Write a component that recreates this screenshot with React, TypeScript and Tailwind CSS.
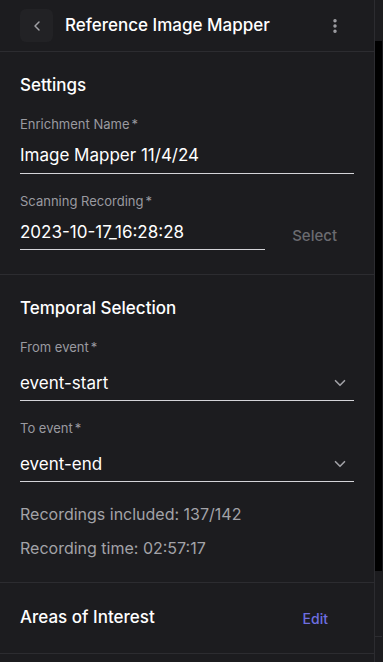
import React from "react";
import { ChevronLeft, ChevronDown, MoreVertical } from "lucide-react";

const Label: React.FC<{ text: string }> = ({ text }) => (
  <div className="text-[13px] leading-4 text-[#9a9aa0]">
    {text}
    <span className="ml-[2px]">*</span>
  </div>
);

const SelectField: React.FC<{ label: string; value: string }> = ({ label, value }) => (
  <div className="flex flex-col">
    <Label text={label} />
    <div className="mt-[16px] flex items-center justify-between border-b border-[#d4d4d8] pb-[5px]">
      <span className="text-[17px] leading-6 text-white">{value}</span>
      <ChevronDown size={18} strokeWidth={2.2} className="mr-[5px] text-[#a1a1a6]" />
    </div>
  </div>
);

export default function App() {
  return (
    <div
      className="flex h-[662px] w-[383px] overflow-hidden bg-[#1c1c1f]"
      style={{ fontFamily: "Inter, 'Noto Sans', sans-serif" }}
    >
      <div className="flex w-[375px] flex-col border-r border-[#2c2c30]">
        <div className="flex h-[52px] shrink-0 items-center border-b border-[#2c2c30] pl-5 pr-[30px]">
          <button className="flex h-[33px] w-[33px] items-center justify-center rounded-md bg-[#222225] text-[#a1a1a6]">
            <ChevronLeft size={16} strokeWidth={2.2} />
          </button>
          <h1 className="ml-3 text-[17px] font-medium text-white">Reference Image Mapper</h1>
          <MoreVertical size={18} strokeWidth={2.6} className="ml-auto text-[#a1a1a6]" />
        </div>

        <div className="flex flex-col border-b border-[#2c2c30] px-5 pb-[24px] pt-[21px]">
          <h2 className="text-[17px] font-medium leading-6 text-white">Settings</h2>
          <div className="mt-[19px]">
            <Label text="Enrichment Name" />
            <div className="mt-[11px] border-b border-[#d4d4d8] pb-[6px] text-[17px] leading-6 text-white">
              Image Mapper 11/4/24
            </div>
          </div>
          <div className="mt-[19px]">
            <Label text="Scanning Recording" />
            <div className="mt-[11px] flex items-end">
              <div className="w-[245px] border-b border-[#d4d4d8] pb-[5px] text-[17px] leading-6 text-white">
                2023-10-17_16:28:28
              </div>
              <button className="ml-auto mr-[17px] pb-[3px] text-[15px] font-medium text-[#6b6b70]">Select</button>
            </div>
          </div>
        </div>

        <div className="flex flex-col border-b border-[#2c2c30] px-5 pb-[22px] pt-[21px]">
          <h2 className="text-[17px] font-medium leading-6 text-white">Temporal Selection</h2>
          <div className="mt-[19px]">
            <SelectField label="From event" value="event-start" />
          </div>
          <div className="mt-[19px]">
            <SelectField label="To event" value="event-end" />
          </div>
          <div className="mt-[20px] text-[16px] leading-6 text-[#a3a3a8]">Recordings included: 137/142</div>
          <div className="mt-[10px] text-[16px] leading-6 text-[#a3a3a8]">Recording time: 02:57:17</div>
        </div>

        <div className="flex h-[71px] shrink-0 items-center justify-between border-b border-[#2c2c30] pl-5 pr-[46px]">
          <h2 className="text-[17px] font-medium text-white">Areas of Interest</h2>
          <button className="text-[14px] font-medium text-[#6e6fe0]">Edit</button>
        </div>
      </div>

      <div className="flex w-[7px] flex-col">
        <div className="h-[41px] bg-[#1c1c1f]" />
        <div className="h-[530px] bg-black" />
        <div className="h-[66px] border-b border-[#2c2c30] bg-[#1c1c1f]" />
      </div>
    </div>
  );
}
